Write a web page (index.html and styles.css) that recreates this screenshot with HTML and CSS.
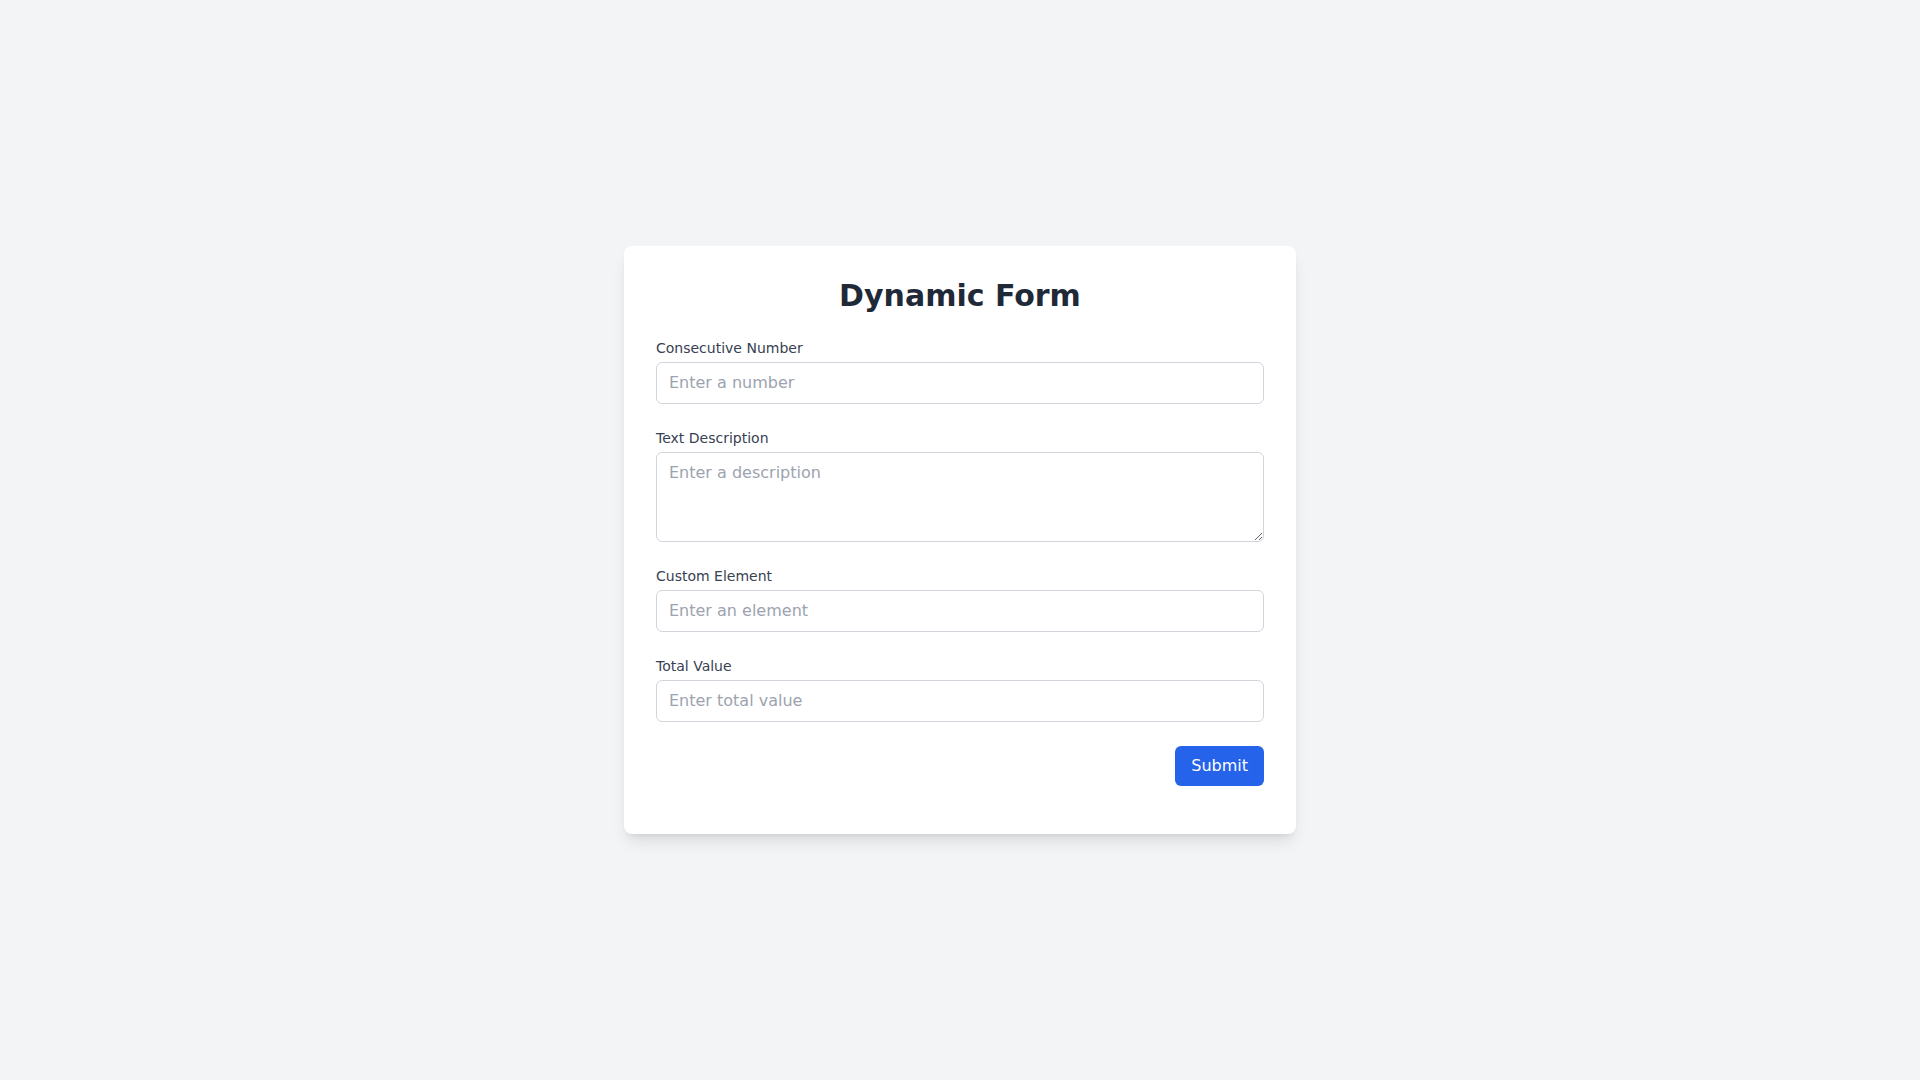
FILE: index.html
```html
<!DOCTYPE html>
<html lang="en">
<head>
<meta charset="utf-8">
<title>Dynamic Form</title>
<link rel="stylesheet" href="styles.css">
</head>
<body>
<main class="page">
  <div class="card">
    <h1 class="title">Dynamic Form</h1>
    <form class="form">
      <div class="field">
        <label class="label" for="num">Consecutive Number</label>
        <input class="control" id="num" type="text" placeholder="Enter a number">
      </div>
      <div class="field">
        <label class="label" for="desc">Text Description</label>
        <textarea class="control area" id="desc" rows="3" placeholder="Enter a description"></textarea>
      </div>
      <div class="field">
        <label class="label" for="el">Custom Element</label>
        <input class="control" id="el" type="text" placeholder="Enter an element">
      </div>
      <div class="field">
        <label class="label" for="total">Total Value</label>
        <input class="control" id="total" type="text" placeholder="Enter total value">
      </div>
      <div class="actions">
        <button class="btn" type="button">Submit</button>
      </div>
    </form>
  </div>
</main>
</body>
</html>
```

FILE: styles.css
```css
* { box-sizing: border-box; }
html, body { margin: 0; padding: 0; }
body {
  background: #f3f4f6;
  font-family: "DejaVu Sans", sans-serif;
  color: #1f2937;
}
.page {
  min-height: 100vh;
  display: flex;
  align-items: center;
  justify-content: center;
}
.card {
  width: 672px;
  background: #ffffff;
  border-radius: 8px;
  padding: 32px 32px 48px;
  box-shadow: 0 10px 15px -3px rgba(0,0,0,0.1), 0 4px 6px -4px rgba(0,0,0,0.1);
}
.title {
  margin: 0 0 24px;
  font-size: 30px;
  line-height: 36px;
  font-weight: 700;
  text-align: center;
  color: #1f2937;
}
.form { display: flex; flex-direction: column; gap: 24px; }
.field { display: flex; flex-direction: column; }
.label {
  font-size: 14px;
  line-height: 20px;
  color: #374151;
  margin-bottom: 4px;
}
.control {
  display: block;
  width: 100%;
  font-family: "DejaVu Sans", sans-serif;
  font-size: 16px;
  line-height: 24px;
  padding: 8px 12px;
  border: 1px solid #d1d5db;
  border-radius: 6px;
  background: #ffffff;
  color: #1f2937;
  margin: 0;
  outline: none;
}
.control::placeholder { color: #9ca3af; opacity: 1; }
.area { height: 90px; resize: vertical; }
.actions { display: flex; justify-content: flex-end; }
.btn {
  font-family: "DejaVu Sans", sans-serif;
  font-size: 16px;
  line-height: 24px;
  padding: 8px 16px;
  background: #2563eb;
  color: #ffffff;
  border: none;
  border-radius: 6px;
  cursor: pointer;
}
```
